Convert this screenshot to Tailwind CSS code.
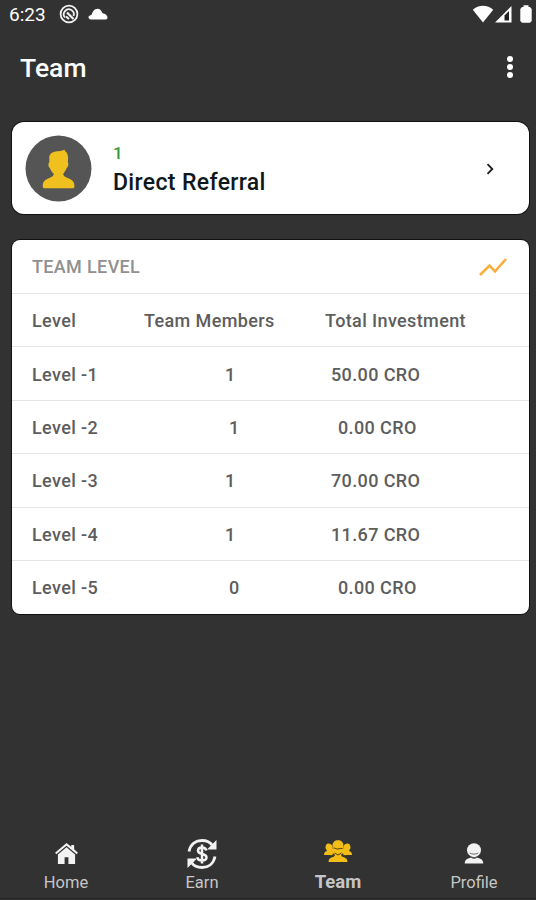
<!DOCTYPE html>
<html lang="en">
<head>
  <meta charset="UTF-8" />
  <meta name="viewport" content="width=device-width, initial-scale=1.0"/>
  <title>Team</title>
  <script src="https://cdn.jsdelivr.net/npm/@tailwindcss/browser@4"></script>
</head>
<body class="bg-[#323232] font-['Roboto',sans-serif]">
  <div class="w-[536px] h-[900px] flex flex-col overflow-hidden">
    <!-- Status bar -->
    <div class="h-7 flex items-center pl-[9px] pr-1 text-white shrink-0">
      <span class="text-[19px] leading-7 w-[50px] mt-0.5">6:23</span>
      <svg class="w-5 h-5" viewBox="0 0 20 20" fill="none" stroke="#f2f2f2">
        <circle cx="10" cy="10" r="8.4" stroke-width="1.8"/>
        <path d="M6 13.500A5 5 0 1 1 14.500 12" stroke-width="1.800"/>
        <path d="M8 8.500l6.500 6.500M7 12.500l3 2.500" stroke-width="2.200"/>
      </svg>
      <svg class="w-5 h-3 ml-[9px]" viewBox="0 0 20 12" fill="#fff">
        <path d="M3 11.5C1.300 11.500.5 10.500.5 9.300c0-1.500 1.500-2 3-2.300C4.500 3.500 6.500.7 9.500.7c2.600 0 4 1.800 5 4.500 2.800.5 5 2 5 4.300 0 1.500-1 2-2.200 2z"/>
      </svg>
      <div class="ml-auto flex items-center">
        <svg class="w-[22px] h-[18px]" viewBox="0 0 22 18" fill="#fff"><path d="M11 17.500L.8 4.800C6.500-.6 15.500-.6 21.200 4.800z"/></svg>
        <svg class="w-[17px] h-[18px] ml-px" viewBox="0 0 17 18"><path d="M0 17.500L16.500 1v16.500z" fill="#fff"/><path d="M9.500 15.500V10.500L14 6v9.500z" fill="#222"/></svg>
        <svg class="w-3 h-[18px] ml-2" viewBox="0 0 12 18" fill="#fff"><path d="M3.500 2V.3h5V2H10l1.700 2v12L10 17.700H2L.3 16V4L2 2z"/></svg>
      </div>
    </div>

    <!-- App bar -->
    <div class="h-20 flex items-center justify-between pl-5 pr-[21px] shrink-0 text-white">
      <h1 class="text-[26.500px] leading-8 font-medium">Team</h1>
      <svg class="w-2.5 h-6 mb-0.5" viewBox="0 0 10 24" fill="#fff"><circle cx="5" cy="4" r="3"/><circle cx="5" cy="12" r="3"/><circle cx="5" cy="20" r="3"/></svg>
    </div>

    <!-- Direct referral -->
    <div class="mt-[14px] ml-3 w-[517px] h-[92px] bg-white rounded-xl ring-1 ring-[#111] flex items-center pl-[13px] shrink-0">
      <svg class="w-[67px] h-[67px]" viewBox="0 0 66 66">
        <circle cx="33" cy="33" r="32.500" fill="#555"/>
        <path d="M24 24C23 18 28 16 33 16c2-.2 4-.8 6-1.500 0 2 3.500 2 3.500 8.500l-.3 3.500c1 1.500.5 5-1.200 6-1 3-2.500 4.500-3.500 6 .5 2 2 3 5 4 5 2 6.200 4 6.200 8 0 1.500-.6 2-2 2H19.500c-1.400 0-2-.5-2-2 0-4 1-6 6-8 3-1 4.500-2 5-4-1.500-1.500-3-3-4-6-1.500-1-2-4.500-.5-6z" fill="#f0c11e"/>
      </svg>
      <div class="ml-[21px] flex flex-col">
        <span class="text-[17px] leading-6 font-medium text-[#35983a] mt-[3px]">1</span>
        <span class="text-[23px] leading-8 font-medium tracking-[0.35px] text-[#0e181b] mt-0.5">Direct Referral</span>
      </div>
      <svg class="w-3 h-3 ml-auto mr-[33px] mt-px" viewBox="0 0 12 12" fill="none" stroke="#1c1c1c" stroke-width="1.800"><path d="M3.500 1.200L8.300 6l-4.800 4.800"/></svg>
    </div>

    <!-- Team level table -->
    <div class="mt-[26px] ml-3 w-[517px] h-[374px] bg-white rounded-lg ring-1 ring-[#111] text-[18px] tracking-[0.38px] font-medium text-[#5d5d5d] flex flex-col shrink-0">
      <div class="h-[53px] flex items-center justify-between pl-5 pr-[22px] text-[#909090]">
        <span class="tracking-[0.35px]">TEAM LEVEL</span>
        <svg class="w-7 h-5" viewBox="0 0 28 20" fill="none" stroke="#fbae3c" stroke-width="2.600"><path d="M1 18L10.500 8.500L16 14.300L27 2"/></svg>
      </div>
      <div class="h-[53.400px] flex items-center pl-5 border-t border-[#e4e4e4]">
        <span class="w-[112px]">Level</span><span class="w-[181px]">Team Members</span><span>Total Investment</span>
      </div>
      <div id="levels"></div>
    </div>

    <!-- Bottom navigation -->
    <nav class="mt-auto -ml-0.5 w-[544px] h-[72px] mb-px grid grid-cols-4 text-[16.500px] text-[#c6c6c6] shrink-0 border-b border-[#262626]">
      <a class="flex flex-col items-center">
        <svg class="w-[23px] h-[21px] mt-4" viewBox="0 0 24 22" fill="#f2f2f2"><path d="M12 0l5 4V2h3v4.600l4 3.700-1.300 1.500L12 2.800 1.300 11.800 0 10.300z"/><path d="M3 12l9-7.500 9 7.500v10h-7v-7h-4v7H3z"/></svg>
        <span class="leading-5 mt-[9px]">Home</span>
      </a>
      <a class="flex flex-col items-center">
        <svg class="w-8 h-8 mt-[11px]" viewBox="0 0 32 32" fill="none" stroke="#f2f2f2" stroke-width="2.800">
          <path d="M3 13.500C4.500 6 10 2.500 16 2.500c5 0 8.500 2 10.500 5"/>
          <path d="M29 18.500C27.500 26 22 29.500 16 29.500c-5 0-8.500-2-10.500-5"/>
          <path d="M30.500 2v9.500H21zM1.500 30v-9.500H11z" fill="#f2f2f2" stroke="none"/>
          <path d="M20.300 12.500c-.4-2-2-3-4.300-3s-4 1-4 3.200c0 4.300 8.500 2.200 8.500 6.600 0 2.100-1.900 3.200-4.500 3.200s-4.400-1.200-4.600-3.400M16 6.500v19" stroke-width="2.500"/>
        </svg>
        <span class="leading-5 mt-[3px]">Earn</span>
      </a>
      <a class="flex flex-col items-center">
        <svg class="w-7 h-[23px] mt-[13px]" viewBox="0 0 28 23" fill="#f3bd18">
          <path d="M1.500 8C1.500 3.500 4 3 6 4c1.500 0 2.500 1 2.500 4l1.500 5-2 2H0c0-2.500 1-3.500 3-4zM26.500 8c0-4.500-2.500-5-4.500-4-1.500 0-2.500 1-2.500 4L18 13l2 2h8c0-2.500-1-3.500-3-4z"/>
          <path d="M8.500 6C8.500 2 11 .3 14 .3S19.500 2 19.500 6v5c-1 2-1.500 3-2.500 4 .5 1.500 2 2 3.500 2.500 2 .7 2.800 2 3 4.500h-19c.2-2.500 1-3.800 3-4.500 1.500-.5 3-1 3.500-2.500-1-1-1.500-2-2.500-4z"/>
          <path d="M9.500 8c2-.2 3 1.500 4.500 1s3-.5 4.500-.5M10.500 13l3.500 2 3.500-2M5 15.500h5M18 15.500h5" fill="none" stroke="#51420f" stroke-width="1"/>
        </svg>
        <span class="leading-5 text-[18.500px] font-bold mt-[9px]">Team</span>
      </a>
      <a class="flex flex-col items-center">
        <svg class="w-5 h-[21px] mt-4" viewBox="0 0 20 22" fill="#f2f2f2">
          <circle cx="10" cy="7.500" r="7.300"/>
          <path d="M.3 21.500c0-3.500 2.500-5.500 6.200-6l3.500 1 3.500-1c3.700.5 6.200 2.500 6.200 6z"/>
          <path d="M5.500 10.500c2.500 1.500 6.500 1.500 9 0M6 14.700c2.500 1.200 5.500 1.200 8 0" fill="none" stroke="#666" stroke-width="1"/>
        </svg>
        <span class="leading-5 mt-[9px]">Profile</span>
      </a>
    </nav>
  </div>

  <script>
    const levels = [
      { name: 'Level -1', members: 1, total: '50.00 CRO' },
      { name: 'Level -2', members: 1, total: '0.00 CRO' },
      { name: 'Level -3', members: 1, total: '70.00 CRO' },
      { name: 'Level -4', members: 1, total: '11.67 CRO' },
      { name: 'Level -5', members: 0, total: '0.00 CRO' }
    ];

    // Shorter totals sit slightly further right
    document.getElementById('levels').innerHTML = levels.map(level => {
      const short = level.total.length < 9;
      return `
        <div class="h-[53.400px] flex items-center pl-5 pt-px border-t border-[#e4e4e4]">
          <span class="w-[112px]">${level.name}</span>
          <span class="w-[181px] ${short ? 'pl-[85px]' : 'pl-[81px]'}">${level.members}</span>
          <span class="${short ? 'pl-[13px]' : 'pl-[6px]'}">${level.total}</span>
        </div>
      `;
    }).join('');
  </script>
</body>
</html>
